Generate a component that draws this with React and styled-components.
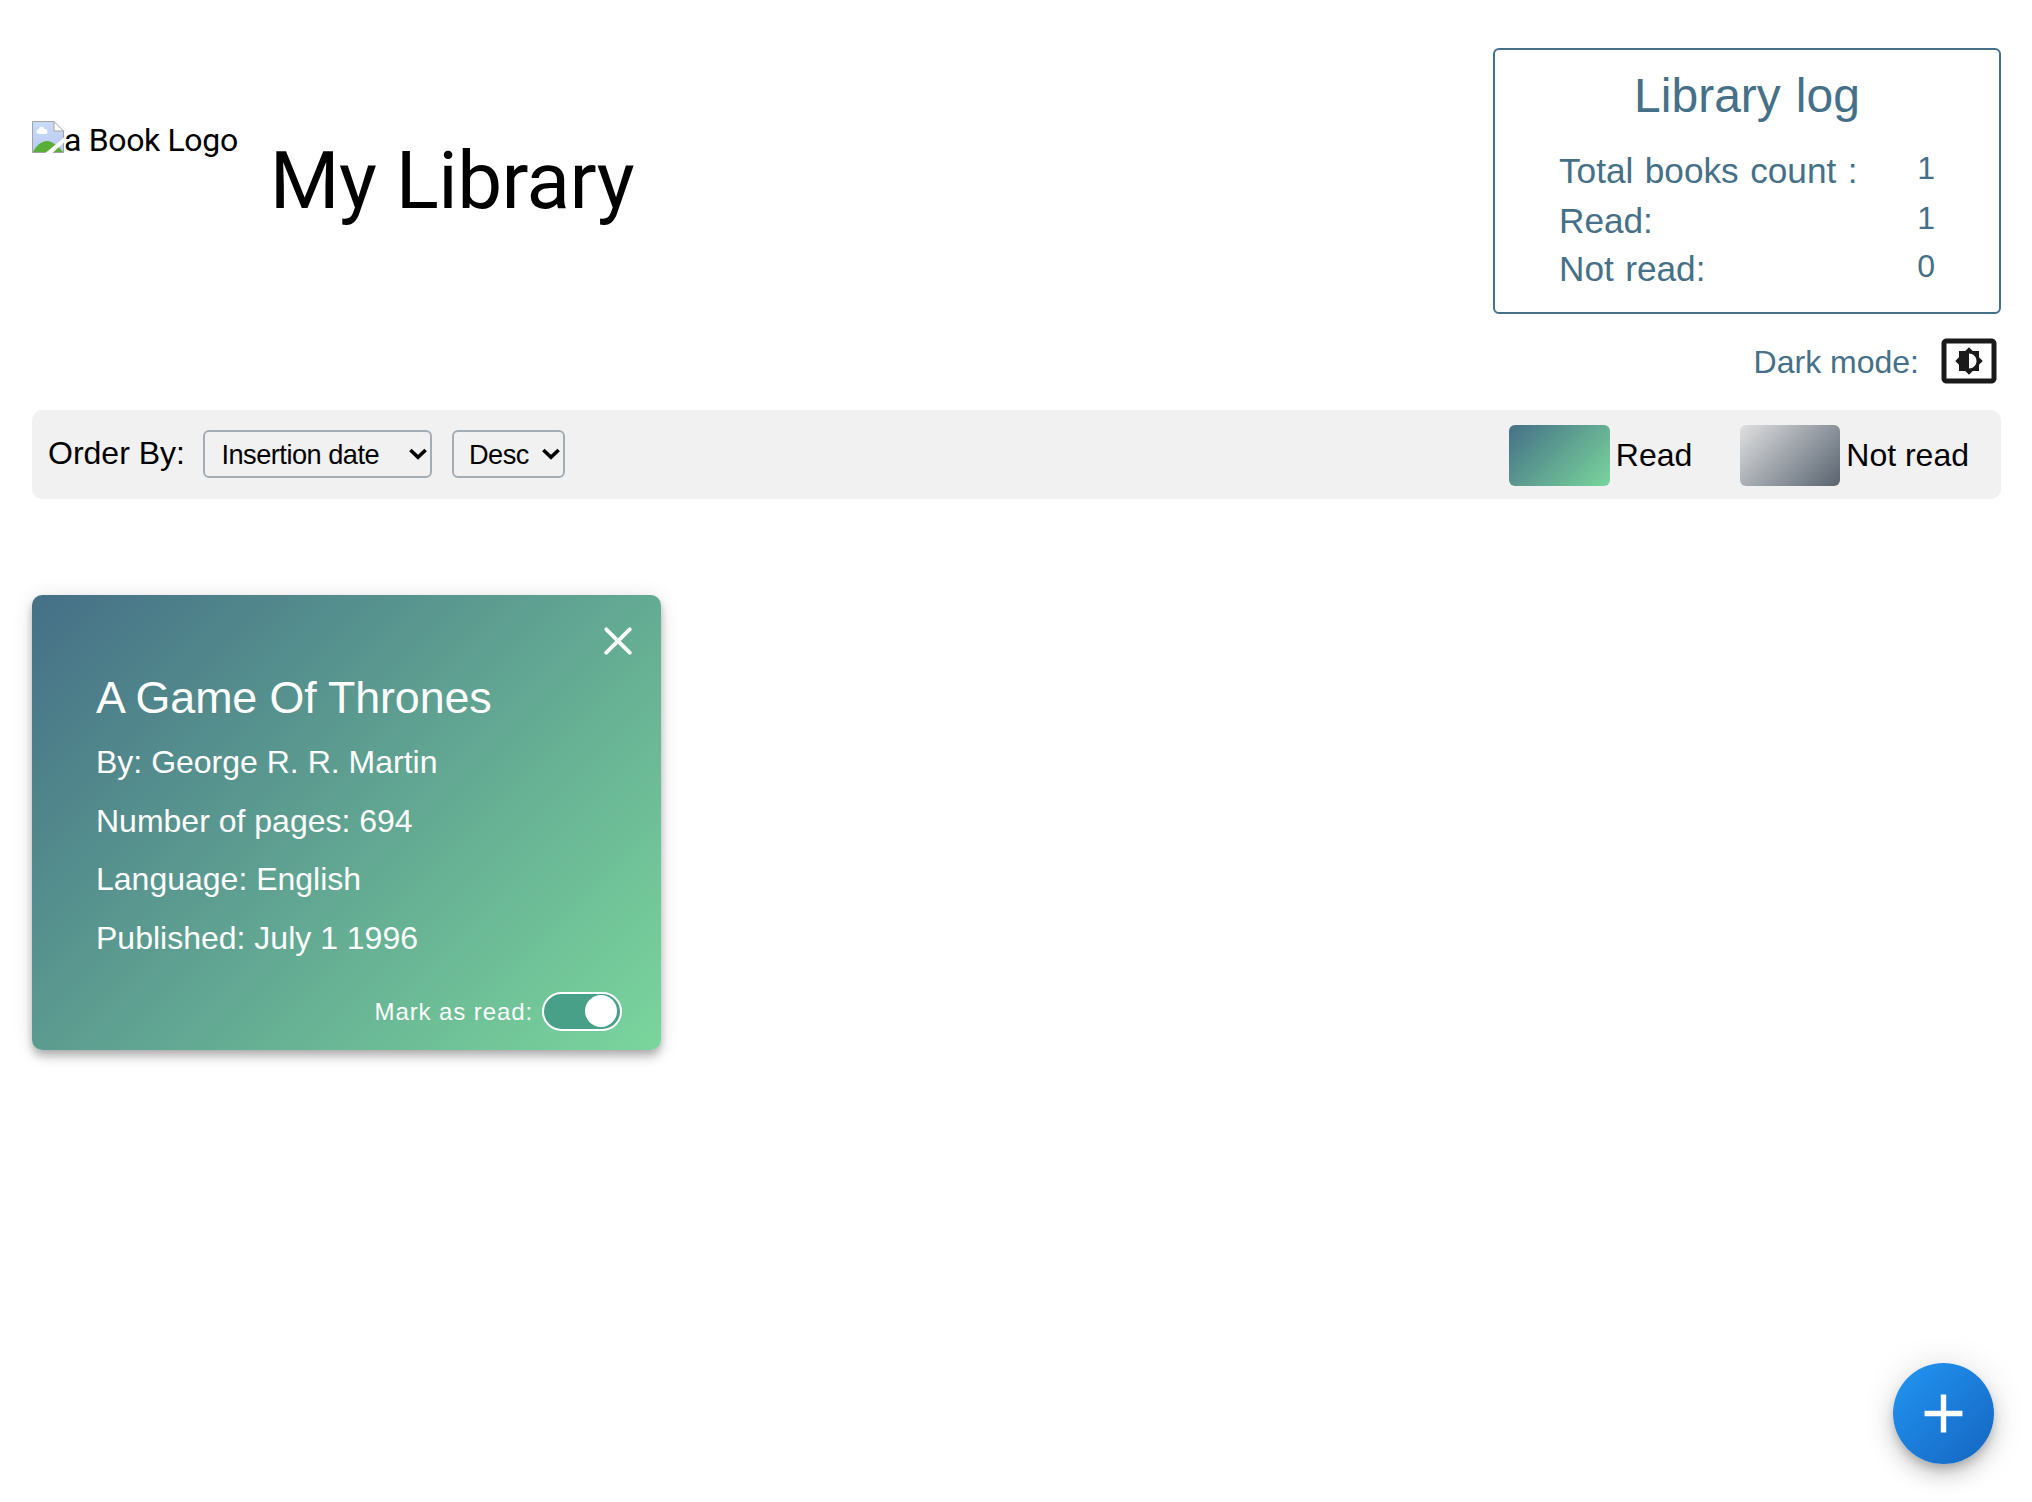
import React from "react";
import styled, { createGlobalStyle } from "styled-components";
import { MdSettingsBrightness, MdAdd } from "react-icons/md";

const sans = `"Liberation Sans", Arial, sans-serif`;
const slate = "#457087";
const readGradient = "linear-gradient(135deg, #457087, #7ad69c)";
const unreadGradient = "linear-gradient(135deg, #e0e0e0, #8d949d 60%, #59636e)";

const GlobalStyle = createGlobalStyle`
  * { box-sizing: border-box; }
  body { margin: 0; background: #fff; color: #000; font: 32px ${sans}; }
`;

const Page = styled.div`
  height: 1502px;
  padding: 48px 31px 0 32px;
  overflow: hidden;
  position: relative;
`;

const Header = styled.header`
  display: flex;
  justify-content: space-between;
  align-items: flex-start;
  height: 266px;
`;

const Brand = styled.div`
  display: flex;
  align-items: flex-start;
  font-family: Roboto, sans-serif;
`;

const Logo = styled.div`
  display: flex;
  margin-top: 72px;
  line-height: 40px;
  letter-spacing: -0.35px;
  svg { flex: none; width: 32px; height: 32px; margin-top: 1px; }
`;

const Title = styled.h1`
  margin: 86px 0 0 32px;
  font-size: 80px;
  font-weight: 400;
  line-height: 94px;
  letter-spacing: -0.55px;
`;

const LogPanel = styled.section`
  width: 508px;
  height: 266px;
  padding: 18px 64px 0;
  border: 2px solid ${slate};
  border-radius: 6px;
  color: ${slate};
  word-spacing: 1.7px;
`;

const LogTitle = styled.h2`
  margin: 0 0 23px;
  font-size: 48px;
  font-weight: 400;
  line-height: 56px;
  text-align: center;
`;

const LogRow = styled.div`
  display: flex;
  justify-content: space-between;
  height: 48px;
  &:nth-of-type(1) { height: 50px; }
`;

const LogLabel = styled.span`
  font-size: 35.2px;
  line-height: 48px;
`;

const LogValue = styled.span`
  line-height: 42px;
`;

const ModeRow = styled.div`
  display: flex;
  justify-content: flex-end;
  align-items: center;
  height: 60px;
  margin: 17px 2px 0 0;
  gap: 20px;
  color: ${slate};
  line-height: 38px;
  span { padding-top: 2px; }
  svg { width: 60px; height: 60px; color: #1a1a1a; }
`;

const Toolbar = styled.div`
  display: flex;
  justify-content: space-between;
  align-items: center;
  height: 89px;
  margin-top: 19px;
  padding: 0 32px 0 16px;
  border-radius: 10px;
  background: #f1f1f1;
`;

const Group = styled.div`
  display: flex;
  align-items: center;
  padding-bottom: ${(p) => p.$lift || 0}px;
`;

const SelectBox = styled.span`
  display: grid;
  align-items: center;
  width: ${(p) => p.$width}px;
  margin-left: ${(p) => p.$gap}px;
  > * { grid-area: 1 / 1; }
  svg {
    justify-self: end;
    width: 18px;
    height: 12px;
    margin-right: 4.500px;
    pointer-events: none;
  }
`;

const Select = styled.select`
  appearance: none;
  width: 100%;
  height: 48px;
  padding: 1px 0 0 ${(p) => p.$inset}px;
  border: 2px solid #a5adb4;
  border-radius: 6px;
  background: #f1f1f1;
  color: #000;
  font: 27.2px ${sans};
  letter-spacing: -0.5px;
`;

const Swatch = styled.span`
  width: ${(p) => p.$width}px;
  height: 61px;
  margin: 1px 6px 0 ${(p) => p.$gap}px;
  border-radius: 6px;
  background: ${(p) => p.$fill};
`;

const SwatchLabel = styled.span`
  padding-top: 2px;
`;

const Card = styled.article`
  width: 629px;
  height: 455px;
  margin-top: 96px;
  padding: 32px 29px 0 64px;
  border-radius: 10px;
  background: ${readGradient};
  color: #fff;
  box-shadow: 0 4px 8px -2px rgba(0, 0, 0, 0.2), 0 8px 10px rgba(0, 0, 0, 0.14),
    0 2px 20px rgba(0, 0, 0, 0.12);
`;

const CloseButton = styled.button`
  display: block;
  width: 28px;
  height: 28px;
  margin: 0 0 0 auto;
  padding: 0;
  border: 0;
  background: none;
  color: #fff;
  svg { display: block; width: 28px; height: 28px; }
`;

const BookTitle = styled.h3`
  margin: 16px 0 21px;
  font-size: 44.8px;
  font-weight: 400;
  line-height: 52px;
  letter-spacing: -0.12px;
`;

const Fact = styled.p`
  margin: 0 0 22.7px;
  line-height: 36px;
`;

const ReadRow = styled.div`
  display: flex;
  justify-content: flex-end;
  align-items: center;
  gap: 9px;
  height: 40px;
  margin: 35px 10px 0 0;
  font-size: 24px;
  letter-spacing: 0.9px;
`;

const ReadLabel = styled.span`
  padding-top: 2px;
`;

const Toggle = styled.span`
  display: flex;
  justify-content: flex-end;
  align-items: center;
  width: 80px;
  height: 39px;
  padding: 0 3px;
  border: 2px solid #fff;
  border-radius: 20px;
  background: #48a088;
`;

const Knob = styled.span`
  width: 32px;
  height: 32px;
  border-radius: 50%;
  background: #fff;
`;

const AddButton = styled.button`
  position: absolute;
  right: 38px;
  bottom: 38px;
  display: grid;
  place-items: center;
  width: 101px;
  height: 101px;
  padding: 0;
  border: 0;
  border-radius: 50%;
  background: linear-gradient(135deg, #2196f3, #1565c0);
  color: #fff;
  box-shadow: 0 6px 10px -2px rgba(0, 0, 0, 0.2), 0 12px 20px rgba(0, 0, 0, 0.14),
    0 2px 36px rgba(0, 0, 0, 0.12);
  svg { width: 65px; height: 65px; }
`;

const log = [["Total books count :", 1], ["Read:", 1], ["Not read:", 0]];
const facts = ["By: George R. R. Martin", "Number of pages: 694", "Language: English", "Published: July 1 1996"];

function MissingImage() {
  return (
    <svg viewBox="0 0 16 16">
      <defs>
        <linearGradient id="sky" x1="0" y1="0" x2="0" y2="1">
          <stop offset="0" stopColor="#c9dbfa" />
          <stop offset="1" stopColor="#b8cbf2" />
        </linearGradient>
      </defs>
      <path d="M.25 .25H11L15.75 5V15.75H.25Z" fill="url(#sky)" />
      <path d="M.5 15.5C2 12.5 4.5 10 7.500 10c2.800 0 5.500 2.500 8 5.500Z" fill="#5aae38" />
      <path d="M3 6.500a1.250 1.250 0 0 1 .3-2.400a1.500 1.500 0 0 1 2.900-.1a1.250 1.250 0 0 1 .5 2.500Z" fill="#fff" />
      <path d="M11 .25V5H15.75Z" fill="#fff" stroke="#a3a3a3" strokeWidth=".5" />
      <path d="M15.750 5V15.750H.25V.25H11" fill="none" stroke="#a3a3a3" strokeWidth=".5" />
      <path d="M16 8.200V10.800L10.200 16H6.700Z" fill="#fff" />
    </svg>
  );
}

function Dropdown({ label, width, gap, inset }) {
  return (
    <SelectBox $width={width} $gap={gap}>
      <Select $inset={inset}><option>{label}</option></Select>
      <svg viewBox="0 0 18 12">
        <path d="M1.400 2L9 9.300L16.600 2" fill="none" stroke="#000" strokeWidth="3.600" />
      </svg>
    </SelectBox>
  );
}

export default function App() {
  return (
    <Page>
      <GlobalStyle />
      <Header>
        <Brand>
          <Logo><MissingImage />a Book Logo</Logo>
          <Title>My Library</Title>
        </Brand>
        <LogPanel>
          <LogTitle>Library log</LogTitle>
          {log.map(([label, value]) => (
            <LogRow key={label}>
              <LogLabel>{label}</LogLabel>
              <LogValue>{value}</LogValue>
            </LogRow>
          ))}
        </LogPanel>
      </Header>
      <ModeRow><span>Dark mode:</span><MdSettingsBrightness /></ModeRow>
      <Toolbar>
        <Group $lift={2}>
          Order By:
          <Dropdown label="Insertion date" width={229} gap={18} inset={16.5} />
          <Dropdown label="Desc" width={113} gap={20} inset={15} />
        </Group>
        <Group>
          <Swatch $width={101} $gap={0} $fill={readGradient} />
          <SwatchLabel>Read</SwatchLabel>
          <Swatch $width={100} $gap={48} $fill={unreadGradient} />
          <SwatchLabel>Not read</SwatchLabel>
        </Group>
      </Toolbar>
      <Card>
        <CloseButton aria-label="Remove book">
          <svg viewBox="0 0 28 28" fill="none" stroke="currentColor" strokeWidth="3.800" strokeLinecap="round">
            <path d="M2.300 2.300L25.700 25.700M25.700 2.300L2.300 25.700" />
          </svg>
        </CloseButton>
        <BookTitle>A Game Of Thrones</BookTitle>
        {facts.map((fact) => <Fact key={fact}>{fact}</Fact>)}
        <ReadRow><ReadLabel>Mark as read:</ReadLabel><Toggle><Knob /></Toggle></ReadRow>
      </Card>
      <AddButton aria-label="Add book"><MdAdd /></AddButton>
    </Page>
  );
}
